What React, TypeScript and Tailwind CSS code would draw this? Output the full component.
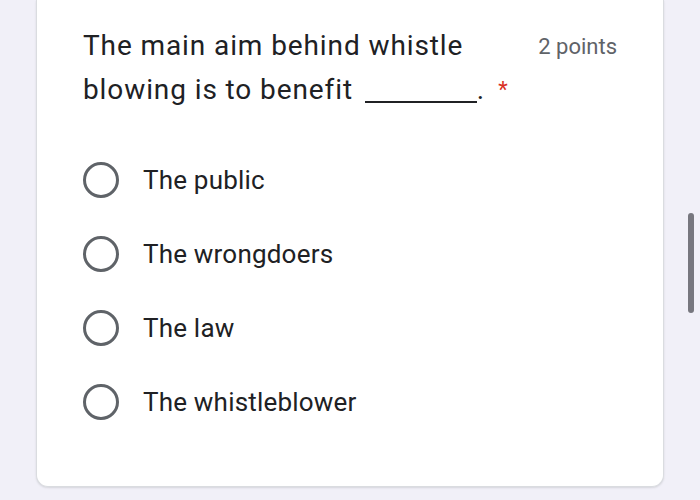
import React from "react";

const options = ["The public", "The wrongdoers", "The law", "The whistleblower"];

export default function App() {
  return (
    <div className="relative h-[500px] w-[700px] overflow-hidden bg-[#f1f0f8] font-['Roboto',sans-serif]">
      <div className="ml-[36px] h-[487px] w-[628px] rounded-b-[12px] border border-t-0 border-[#dadce0] bg-white pl-[46px] pr-[46px] pt-[24px] shadow-[0_1px_2px_rgba(60,64,67,0.15)]">
        <div className="flex items-start justify-between">
          <div className="text-[28px] leading-[44px] tracking-[0.9px] text-[#202124]">
            The main aim behind whistle
            <br />
            blowing is to benefit{" "}
            <span className="ml-[4px] inline-block h-[2px] w-[112px] bg-[#202124] align-[-4px]" />
            .
            <span className="ml-[13px] align-top text-[22px] text-[#d93025]">*</span>
          </div>
          <div className="pt-[9px] text-[22px] leading-[28px] text-[#5f6368]">2 points</div>
        </div>
        <div className="mt-[50px] flex flex-col gap-[38px]">
          {options.map((o) => (
            <div key={o} className="flex items-center gap-[24px]">
              <div className="h-[36px] w-[36px] rounded-full border-[3px] border-[#5f6368]" />
              <span className="text-[26px] leading-[36px] tracking-[0.2px] text-[#202124]">{o}</span>
            </div>
          ))}
        </div>
      </div>
      <div className="absolute left-[688px] top-[213px] h-[100px] w-[6px] rounded-full bg-[#77777f]" />
    </div>
  );
}
